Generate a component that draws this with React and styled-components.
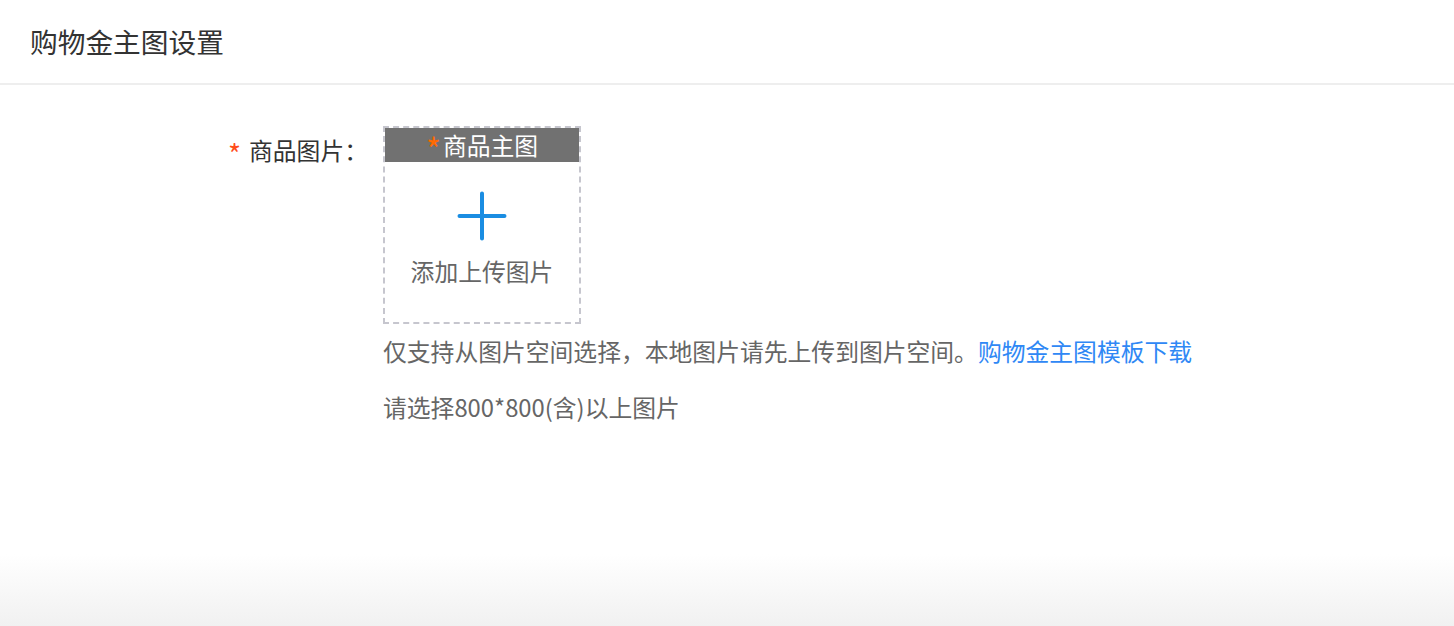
import React from 'react';
import styled, { createGlobalStyle } from 'styled-components';

const GlobalStyle = createGlobalStyle`
  html, body {
    margin: 0;
    padding: 0;
  }
  body {
    font-family: "Noto Sans CJK SC", "Noto Sans", sans-serif;
    color: #333;
  }
  * {
    box-sizing: border-box;
  }
`;

function App() {
  return (
    <Page>
      <GlobalStyle />
      <Header>
        <Title>购物金主图设置</Title>
      </Header>
      <Form>
        <Row>
          <Label>
            <Required>*</Required>商品图片：
          </Label>
          <Control>
            <Upload>
              <UploadBar>
                <BarStar>*</BarStar>商品主图
              </UploadBar>
              <UploadBody>
                <svg width="50" height="50" viewBox="0 0 50 50">
                  <path
                    d="M25 2.5v45M2.5 25h45"
                    stroke="#1a8de2"
                    strokeWidth="4"
                    strokeLinecap="round"
                    fill="none"
                  />
                </svg>
                <UploadText>添加上传图片</UploadText>
              </UploadBody>
            </Upload>
            <Tip $first>
              仅支持从图片空间选择，本地图片请先上传到图片空间。
              <Link href="#">购物金主图模板下载</Link>
            </Tip>
            <Tip>请选择800*800(含)以上图片</Tip>
          </Control>
        </Row>
      </Form>
    </Page>
  );
}

const Page = styled.div`
  min-height: 100vh;
  background: linear-gradient(to bottom, #fff calc(100% - 72px), #f1f1f1 100%);
`;

const Header = styled.header`
  height: 85px;
  display: flex;
  align-items: center;
  padding: 0 30px 2px;
  border-bottom: 2px solid #eeeeee;
`;

const Title = styled.h1`
  margin: 0;
  font-size: 27.7px;
  font-weight: 400;
  color: #333;
`;

const Form = styled.section`
  padding-top: 41px;
`;

const Row = styled.div`
  display: flex;
  align-items: flex-start;
  gap: 15px;
`;

const Label = styled.label`
  width: 368px;
  text-align: right;
  font-size: 23.8px;
  line-height: 34px;
  padding-top: 7px;
  color: #333;
`;

const Required = styled.span`
  color: #ff4d1a;
  font-size: 28px;
  vertical-align: -5px;
  line-height: 0;
  margin-right: 8px;
`;

const Control = styled.div`
  display: flex;
  flex-direction: column;
`;

const Upload = styled.div`
  width: 198px;
  height: 198px;
  border: 2px dashed #c6c6ce;
  display: flex;
  flex-direction: column;
`;

const UploadBar = styled.div`
  height: 34px;
  background: #717171;
  color: #fff;
  font-size: 23.8px;
  line-height: 33px;
  text-align: center;
`;

const BarStar = styled.span`
  color: #ff6a00;
  font-size: 32px;
  vertical-align: -7px;
  line-height: 0;
  margin-right: 2px;
`;

const UploadBody = styled.div`
  flex: 1;
  display: flex;
  flex-direction: column;
  align-items: center;
  padding-top: 29px;
`;

const UploadText = styled.div`
  margin-top: 15px;
  font-size: 23.8px;
  line-height: 30px;
  color: #666;
`;

const Tip = styled.p`
  margin: ${(p) => (p.$first ? '9px' : '20px')} 0 0;
  font-size: 23.8px;
  line-height: 36px;
  color: #666;
  white-space: nowrap;
`;

const Link = styled.a`
  color: #2f88f5;
  text-decoration: none;
`;

export default App;
